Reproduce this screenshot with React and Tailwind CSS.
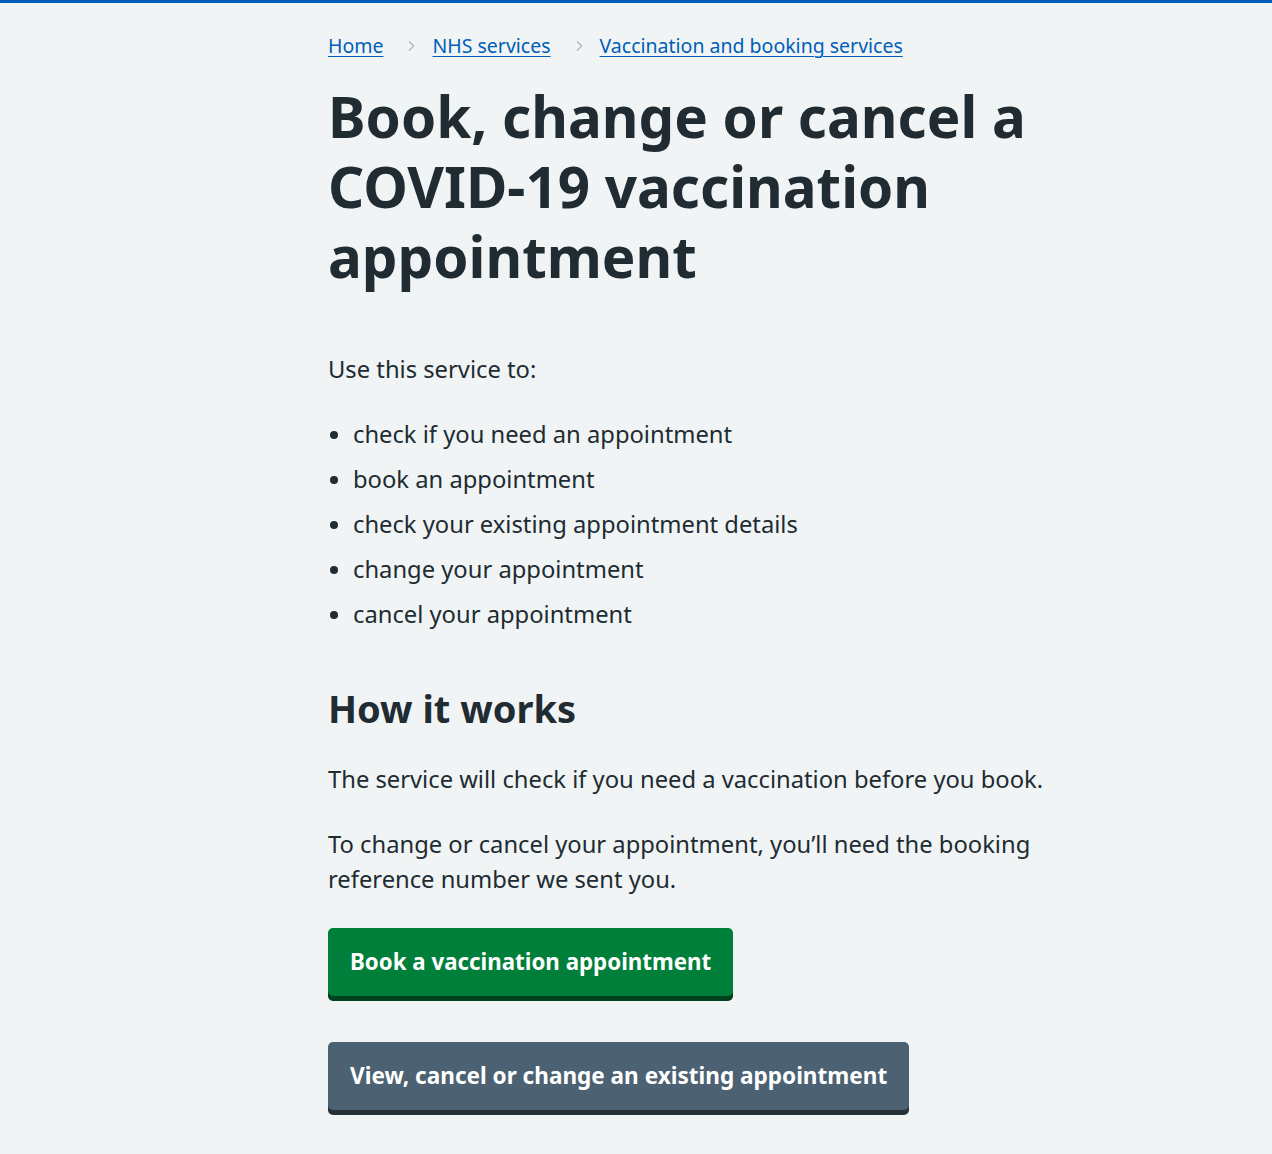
const Chevron = () => (
  <svg viewBox="0 0 8 14" className="w-[7px] h-[12px] ml-[25px] mr-[17px] shrink-0" fill="none" stroke="#aeb7bd" strokeWidth="1.6" strokeLinecap="round" strokeLinejoin="round">
    <path d="M1.5 2l5 5-5 5" />
  </svg>
);

const crumbs = ['Home', 'NHS services', 'Vaccination and booking services'];

const uses = [
  'check if you need an appointment',
  'book an appointment',
  'check your existing appointment details',
  'change your appointment',
  'cancel your appointment',
];

export default function App() {
  return (
    <div className="min-h-[1154px] bg-[#f0f4f5] text-[#212b32] font-['Noto_Sans',sans-serif]">
      <div className="h-[3px] bg-[#005eb8]" />

      <div className="pl-[328px] pb-[40px]">
        <div className="max-w-[760px]">
          {/* Breadcrumb */}
          <nav className="pt-[28px] flex items-center h-[58px] text-[19.5px] leading-[30px]">
            {crumbs.map((c, i) => (
              <div key={c} className="flex items-center">
                {i > 0 && <Chevron />}
                <a href="#" className="text-[#005eb8] underline underline-offset-[3px] decoration-1">
                  {c}
                </a>
              </div>
            ))}
          </nav>

          <h1 className="mt-[21px] text-[56.5px] leading-[70px] font-bold">
            Book, change or cancel a COVID-19 vaccination appointment
          </h1>

          <p className="mt-[60px] text-[23.75px] leading-[35px]">Use this service to:</p>

          <ul className="mt-[30px] list-disc pl-[25px] text-[23.75px] leading-[35px] flex flex-col gap-[10px]">
            {uses.map((u) => (
              <li key={u}>{u}</li>
            ))}
          </ul>

          <h2 className="mt-[51px] text-[38px] leading-[50px] font-bold">How it works</h2>

          <p className="mt-[29px] text-[23.75px] leading-[35px]">
            The service will check if you need a vaccination before you book.
          </p>
          <p className="mt-[30px] text-[23.75px] leading-[35px]">
            To change or cancel your appointment, you’ll need the booking reference number we sent you.
          </p>

          <div className="flex flex-col items-start">
            <button className="mt-[31px] bg-[#007f3b] text-white font-bold text-[22.3px] leading-[36px] px-[22px] py-[16px] rounded-[5px] shadow-[0_5px_0_#00401e]">
              Book a vaccination appointment
            </button>
            <button className="mt-[46px] bg-[#4c6272] text-white font-bold text-[22.55px] leading-[36px] px-[22px] py-[16px] rounded-[5px] shadow-[0_5px_0_#263139]">
              View, cancel or change an existing appointment
            </button>
          </div>
        </div>
      </div>
    </div>
  );
}
